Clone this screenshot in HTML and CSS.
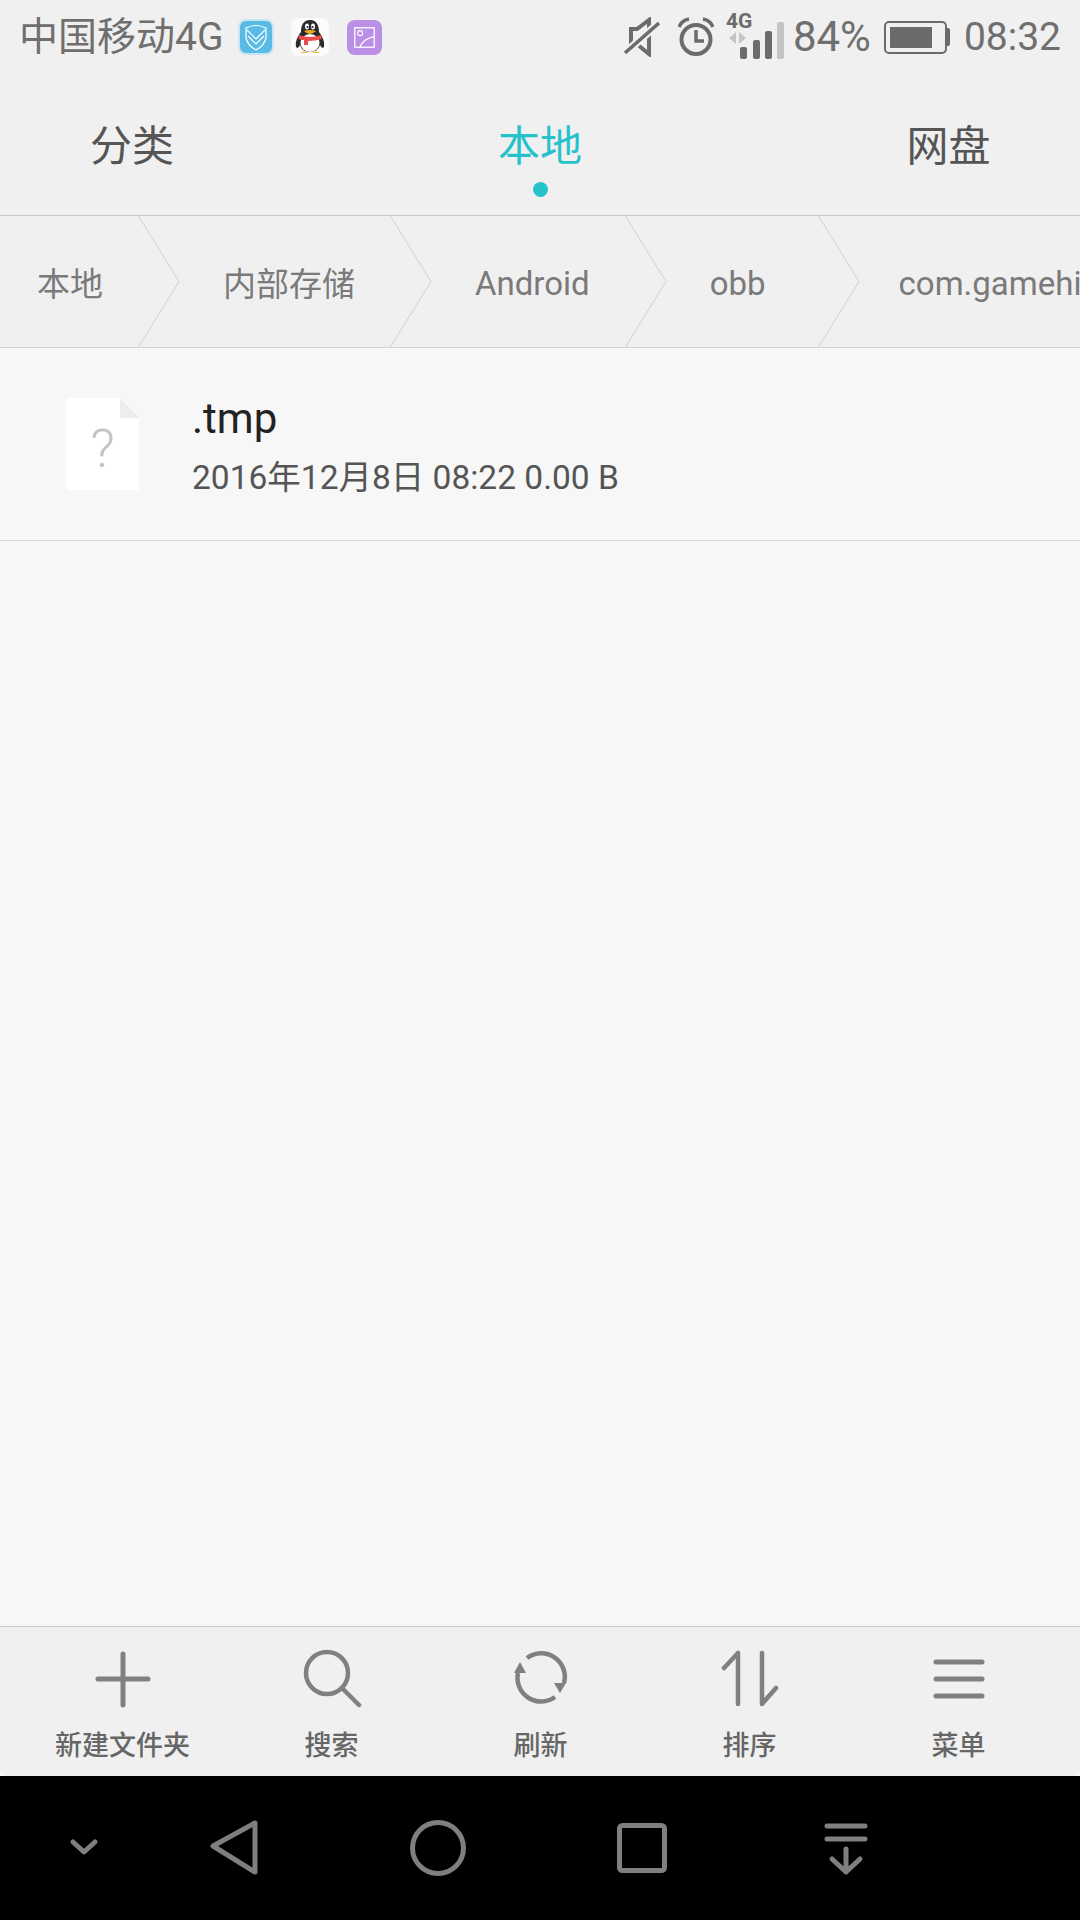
FILE: index.html
```html
<!DOCTYPE html>
<html lang="zh-CN">
<head>
    <meta charset="UTF-8">
    <meta name="viewport" content="width=device-width, initial-scale=1.0">
    <title>本地</title>
    <link rel="stylesheet" href="styles.css">
</head>
<body>
    <div class="page">
        <header class="status-bar">
            <div class="status-left">
                <span class="carrier">中国移动4G</span>
                <svg class="app-icon shield-icon" viewBox="0 0 36 36">
                    <rect x="1" y="1" width="34" height="34" rx="7" fill="#59bbe5" stroke="#c9e4f1" stroke-width="2"/>
                    <path d="M8 9 Q18 4 28 9 L28 19 Q26 27 18 31 Q10 27 8 19 Z" fill="none" stroke="#fff" stroke-width="1.2"/>
                    <path d="M9 11 L18 20 L27 11 M10 17 L18 25 L26 17" fill="none" stroke="#fff" stroke-width="1.2"/>
                </svg>
                <svg class="app-icon qq-icon" viewBox="0 0 38 38">
                    <rect width="38" height="38" rx="7" fill="#fbfbfb"/>
                    <path d="M19 2 C12 2 10 8 10 14 C7 18 4 23 5 29 C7 31 8 29 9 27 C11 32 14 34 19 34 C24 34 27 32 29 27 C30 29 31 31 33 29 C34 23 31 18 28 14 C28 8 26 2 19 2 Z" fill="#2b2b2b"/>
                    <ellipse cx="19" cy="25" rx="9.5" ry="9" fill="#fff"/>
                    <ellipse cx="16" cy="8.5" rx="2" ry="3" fill="#fff"/>
                    <ellipse cx="22" cy="8.5" rx="2" ry="3" fill="#fff"/>
                    <circle cx="16.5" cy="9" r="1.1" fill="#222"/>
                    <circle cx="21.5" cy="9" r="1.1" fill="#222"/>
                    <path d="M13 13 Q19 11 25 13 Q22 16 19 16 Q16 16 13 13 Z" fill="#f2a81d"/>
                    <path d="M8 17 Q19 21 30 17 L31 21 Q24 23 17 23 L17 27 L13 27 L13 22 Q10 22 7.5 21 Z" fill="#ec4b4b"/>
                    <path d="M9 35 Q13 32 17 35 Z M21 35 Q25 32 29 35 Z" fill="#f6bd2b"/>
                </svg>
                <svg class="app-icon photo-icon" viewBox="0 0 36 36">
                    <rect width="36" height="36" rx="8" fill="#bb8fe6"/>
                    <rect x="8" y="8" width="20" height="20" fill="none" stroke="#fff" stroke-width="1.3"/>
                    <circle cx="13.5" cy="13.5" r="2.5" fill="none" stroke="#fff" stroke-width="1.2"/>
                    <path d="M13 28 Q17 19 28 17" fill="none" stroke="#fff" stroke-width="1.3"/>
                </svg>
            </div>
            <div class="status-right">
                <svg class="mute-icon" width="36" height="40" viewBox="0 0 36 40">
                    <path d="M7 12 H13 L25 3 V37 L14 28 H7 Z" fill="none" stroke="#6b6b6b" stroke-width="4"/>
                    <path d="M1 36 L35 6" stroke="#f0f0f0" stroke-width="8"/>
                    <path d="M1 36 L35 6" stroke="#6b6b6b" stroke-width="3.5"/>
                </svg>
                <svg class="alarm-icon" width="36" height="40" viewBox="0 0 36 40">
                    <circle cx="18" cy="22.5" r="14.5" fill="none" stroke="#6b6b6b" stroke-width="4"/>
                    <path d="M18 13 V24 H26" fill="none" stroke="#6b6b6b" stroke-width="3.5"/>
                    <path d="M1 10 Q4 3 11 2 M35 10 Q32 3 25 2" fill="none" stroke="#6b6b6b" stroke-width="3.5"/>
                </svg>
                <div class="signal">
                    <span class="signal-type">4G</span>
                    <svg class="signal-arrows" width="18" height="12" viewBox="0 0 18 12">
                        <path d="M7 0 V12 L0 6 Z M10 0 L17 6 L10 12 Z" fill="#c6c6c6"/>
                    </svg>
                    <span class="bar bar-1"></span>
                    <span class="bar bar-2"></span>
                    <span class="bar bar-3"></span>
                    <span class="bar bar-4"></span>
                </div>
                <span class="battery-text">84%</span>
                <div class="battery">
                    <div class="battery-body"><div class="battery-fill"></div></div>
                    <div class="battery-nub"></div>
                </div>
                <span class="clock">08:32</span>
            </div>
        </header>

        <nav class="tabs">
            <a class="tab">分类</a>
            <a class="tab tab-active">本地</a>
            <a class="tab">网盘</a>
        </nav>

        <div class="crumbs">
            <div class="crumb crumb-first"><span>本地</span><svg class="crumb-arrow" width="42" height="131" viewBox="0 0 42 131"><path d="M0.5 0 L41 65.5 L0.5 131" fill="none" stroke="#cfcfcf"/></svg></div>
            <div class="crumb"><span>内部存储</span><svg class="crumb-arrow" width="42" height="131" viewBox="0 0 42 131"><path d="M0.5 0 L41 65.5 L0.5 131" fill="none" stroke="#cfcfcf"/></svg></div>
            <div class="crumb crumb-latin"><span>Android</span><svg class="crumb-arrow" width="42" height="131" viewBox="0 0 42 131"><path d="M0.5 0 L41 65.5 L0.5 131" fill="none" stroke="#cfcfcf"/></svg></div>
            <div class="crumb crumb-latin crumb-short"><span>obb</span><svg class="crumb-arrow" width="42" height="131" viewBox="0 0 42 131"><path d="M0.5 0 L41 65.5 L0.5 131" fill="none" stroke="#cfcfcf"/></svg></div>
            <div class="crumb crumb-latin crumb-last"><span>com.gamehi</span></div>
        </div>

        <main class="file-list">
            <div class="file-row">
                <div class="file-icon">
                    <span class="file-fold"></span>
                    <span class="file-mark">?</span>
                </div>
                <div class="file-info">
                    <div class="file-name">.tmp</div>
                    <div class="file-meta">2016年12月8日 08:22 0.00 B</div>
                </div>
            </div>
        </main>

        <footer class="toolbar">
            <div class="tool">
                <svg width="60" height="60" viewBox="0 0 60 60"><path d="M30 5 V56 M5 30 H55" stroke="#808080" stroke-width="5" stroke-linecap="round"/></svg>
                <span>新建文件夹</span>
            </div>
            <div class="tool">
                <svg width="60" height="60" viewBox="0 0 60 60"><circle cx="25" cy="24" r="21" fill="none" stroke="#808080" stroke-width="4.5"/><path d="M41 40 L57 56" stroke="#808080" stroke-width="4.5" stroke-linecap="round"/></svg>
                <span>搜索</span>
            </div>
            <div class="tool">
                <svg width="60" height="60" viewBox="0 0 60 60">
                    <path d="M16 9 A23.6 23.6 0 0 1 53 34" fill="none" stroke="#808080" stroke-width="4.5"/>
                    <path d="M44 48 A23.6 23.6 0 0 1 7 24" fill="none" stroke="#808080" stroke-width="4.5"/>
                    <path d="M9 13 L15 24 L3 24 Z M49 44 L43 34 L55 34 Z" fill="#808080"/>
                </svg>
                <span>刷新</span>
            </div>
            <div class="tool">
                <svg width="60" height="60" viewBox="0 0 60 60"><path d="M4 19 L18 4 V55 M42 4 V55 L56 39" fill="none" stroke="#808080" stroke-width="4.5" stroke-linecap="round" stroke-linejoin="round"/></svg>
                <span>排序</span>
            </div>
            <div class="tool">
                <svg width="60" height="60" viewBox="0 0 60 60"><path d="M7 13 H53 M7 30 H53 M7 47 H53" stroke="#808080" stroke-width="5" stroke-linecap="round"/></svg>
                <span>菜单</span>
            </div>
        </footer>

        <div class="nav-bar">
            <svg class="nav-key nav-hide" width="60" height="60" viewBox="0 0 60 60"><path d="M19 24 L30 34 L41 24" fill="none" stroke="#7f7f7f" stroke-width="5" stroke-linecap="round" stroke-linejoin="round"/></svg>
            <svg class="nav-key nav-back" width="60" height="60" viewBox="0 0 60 60"><path d="M9 28 L51 5 V54 Z" fill="none" stroke="#7f7f7f" stroke-width="5" stroke-linejoin="round"/></svg>
            <svg class="nav-key" width="60" height="60" viewBox="0 0 60 60"><circle cx="30" cy="30" r="25.5" fill="none" stroke="#7f7f7f" stroke-width="5"/></svg>
            <svg class="nav-key" width="60" height="60" viewBox="0 0 60 60"><rect x="7.5" y="7.5" width="45" height="45" rx="3" fill="none" stroke="#7f7f7f" stroke-width="5"/></svg>
            <svg class="nav-key" width="60" height="60" viewBox="0 0 60 60"><path d="M11 8 H49 M11 21 H49" stroke="#7f7f7f" stroke-width="5" stroke-linecap="round"/><path d="M30 31 V54 M16 41 L30 54 L44 41" fill="none" stroke="#7f7f7f" stroke-width="5" stroke-linecap="round" stroke-linejoin="round"/></svg>
        </div>
    </div>
</body>
</html>
```

FILE: styles.css
```css
* {
    box-sizing: border-box;
}
html, body {
    margin: 0;
    padding: 0;
    background: #000;
}
body {
    font-family: Roboto, "Noto Sans CJK SC", sans-serif;
}
.page {
    display: flex;
    flex-direction: column;
    width: 1080px;
    height: 1920px;
    overflow: hidden;
    background: #f7f7f7;
}

/* status bar */
.status-bar {
    display: flex;
    justify-content: space-between;
    align-items: center;
    height: 74px;
    padding: 0 19px 0 19px;
    background: #f0f0f0;
    color: #6f6f6f;
}
.status-left, .status-right {
    display: flex;
    align-items: center;
}
.carrier {
    font-size: 39px;
    line-height: 40px;
    margin-right: 15px;
}
.app-icon {
    display: block;
}
.shield-icon {
    width: 36px;
    height: 36px;
}
.qq-icon {
    width: 38px;
    height: 38px;
    margin-left: 17px;
}
.photo-icon {
    width: 35px;
    height: 35px;
    margin-left: 18px;
}
.mute-icon {
    margin-right: 18px;
}
.alarm-icon {
    margin-right: 12px;
}
.signal {
    position: relative;
    width: 58px;
    height: 44px;
    margin-right: 9px;
}
.signal-type {
    position: absolute;
    left: 0;
    top: -4px;
    font-size: 21px;
    font-weight: 700;
    line-height: 20px;
    color: #6b6b6b;
}
.signal-arrows {
    position: absolute;
    left: 3px;
    top: 17px;
}
.bar {
    position: absolute;
    bottom: 0;
    width: 7px;
    border-radius: 2px;
    background: #6b6b6b;
}
.bar-1 { left: 14px; height: 12px; }
.bar-2 { left: 27px; height: 19px; }
.bar-3 { left: 39px; height: 28px; }
.bar-4 { left: 51px; height: 37px; background: #c4c4c4; }
.battery-text {
    font-size: 42px;
    line-height: 40px;
    margin-right: 13px;
}
.battery {
    display: flex;
    align-items: center;
    margin-right: 14px;
}
.battery-body {
    width: 63px;
    height: 33px;
    padding: 4px 13px 4px 4px;
    border: 2px solid #6b6b6b;
    border-radius: 5px;
}
.battery-fill {
    height: 100%;
    background: #6b6b6b;
}
.battery-nub {
    width: 3px;
    height: 18px;
    background: #6b6b6b;
    border-radius: 0 2px 2px 0;
}
.clock {
    font-size: 39px;
    line-height: 40px;
}

/* tabs */
.tabs {
    display: grid;
    grid-template-columns: repeat(3, 1fr);
    height: 142px;
    background: #f0f0f0;
    border-bottom: 1px solid #c8c8c8;
}
.tab {
    position: relative;
    padding-top: 43px;
    text-align: center;
    font-size: 42px;
    line-height: 60px;
    color: #555;
}
.tab:first-child {
    padding-right: 96px;
}
.tab:last-child {
    padding-left: 97px;
}
.tab-active {
    color: #26c2cc;
}
.tab-active::after {
    content: "";
    position: absolute;
    left: 50%;
    top: 108px;
    width: 15px;
    height: 15px;
    margin-left: -7.5px;
    border-radius: 50%;
    background: #26c2cc;
}

/* breadcrumb */
.crumbs {
    display: flex;
    height: 132px;
    overflow: hidden;
    background: #f0f0f0;
    border-bottom: 1px solid #d4d4d4;
    font-size: 33px;
    color: #7a7a7a;
    white-space: nowrap;
}
.crumb {
    display: flex;
    align-items: center;
    flex: none;
}
.crumb span {
    padding: 0 35px 0 43px;
}
.crumb-first span {
    padding-left: 37px;
}
.crumb-latin span {
    padding-top: 4px;
}
.crumb-short span {
    padding-right: 52px;
}
.crumb-last span {
    padding-left: 39px;
}
.crumb-arrow {
    display: block;
    flex: none;
}

/* file list */
.file-list {
    flex: 1;
    background: #f7f7f7;
}
.file-row {
    display: flex;
    align-items: center;
    height: 193px;
    padding-left: 66px;
    border-bottom: 1px solid #d9d9d9;
}
.file-icon {
    position: relative;
    width: 73px;
    height: 92px;
    margin-right: 53px;
    background: #fff;
    border-radius: 2px;
    text-align: center;
}
.file-fold {
    position: absolute;
    right: 0;
    top: 0;
    width: 19px;
    height: 20px;
    background: linear-gradient(to top right, #ededed 50%, #f7f7f7 50%);
}
.file-mark {
    display: block;
    padding-top: 22px;
    font-size: 54px;
    font-weight: 300;
    line-height: 58px;
    color: #c4c4c4;
}
.file-info {
    padding-top: 3px;
}
.file-name {
    font-size: 42px;
    line-height: 52px;
    color: #222;
}
.file-meta {
    margin-top: 12px;
    font-size: 33.5px;
    line-height: 42px;
    color: #555;
}

/* bottom toolbar */
.toolbar {
    display: grid;
    grid-template-columns: repeat(5, 209px);
    height: 150px;
    padding: 0 18px;
    background: #f0f0f0;
    border-top: 1px solid #c8c8c8;
    border-radius: 0 0 8px 8px;
}
.tool {
    display: flex;
    flex-direction: column;
    align-items: center;
    padding-top: 22px;
}
.tool svg {
    display: block;
}
.tool span {
    margin-top: 20px;
    font-size: 27px;
    font-weight: 500;
    line-height: 34px;
    color: #666;
}

/* navigation keys */
.nav-bar {
    display: flex;
    align-items: center;
    gap: 144px;
    height: 144px;
    padding-left: 54px;
    background: #000;
}
.nav-key {
    display: block;
    flex: none;
}
.nav-back {
    margin-left: -54px;
}
```
